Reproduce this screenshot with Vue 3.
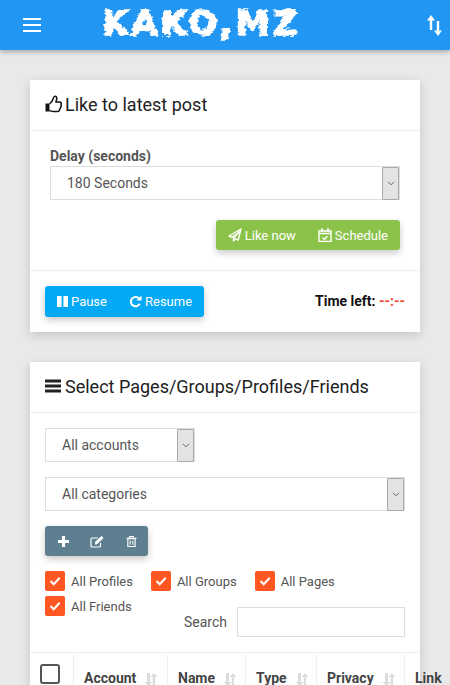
<script setup>
const checks = ['All Profiles', 'All Groups', 'All Pages', 'All Friends']
const columns = [
  { label: 'Account', width: 94, sort: true },
  { label: 'Name', width: 78, sort: true },
  { label: 'Type', width: 71, sort: true },
  { label: 'Privacy', width: 88, sort: true },
  { label: 'Link', width: 60, sort: false },
]
</script>

<template>
  <div class="page">
    <svg class="defs" width="0" height="0" aria-hidden="true">
      <filter id="jag" x="-5%" y="-20%" width="110%" height="140%">
        <feTurbulence type="fractalNoise" baseFrequency="0.14 0.28" numOctaves="2" seed="4" result="n" />
        <feDisplacementMap in="SourceGraphic" in2="n" scale="6" xChannelSelector="R" yChannelSelector="G" />
      </filter>
    </svg>

    <header class="topbar">
      <button class="menu" aria-label="Menu"><span></span><span></span><span></span></button>
      <div class="logo">KAKO,MZ</div>
      <svg class="swap" viewBox="0 0 15 21" width="15" height="21">
        <path d="M4 4v11" fill="none" stroke="#fff" stroke-width="2.400" />
        <path d="M4 0 8 5.500H0z" fill="#fff" />
        <path d="M11 6v11" fill="none" stroke="#fff" stroke-width="2.400" />
        <path d="M11 21l4-5.500H7z" fill="#fff" />
      </svg>
    </header>

    <main class="content">
      <section class="card">
        <h2 class="card-head">
          <svg class="head-icon thumb" viewBox="0 0 17 18" width="17" height="18">
            <path d="M0.500 8.500H4.500V16.500H0.500z" fill="#111" />
            <path d="M4.500 9c1.800-1.300 3.200-3.500 3.800-5.800C8.600 2 9 1.200 10 1.200c1.600 0 2 1.500 1.600 3.100L10.900 7h3.800c1.500 0 1.900 1.400 1.300 2.500.5 1 .3 2-.5 2.600.2 1-.2 1.800-1 2.300.1 1.300-.6 2.100-2 2.100H8.500c-1.600 0-2.600-.6-4-1" fill="none" stroke="#111" stroke-width="1.500" stroke-linejoin="round" />
          </svg>
          Like to latest post
        </h2>
        <div class="delay">
          <div class="field-label">Delay (seconds)</div>
          <div class="select select-pad"><span>180 Seconds</span><i class="arrow"><svg viewBox="0 0 10 6" width="8" height="5"><path d="M1 1l4 3.500L9 1" fill="none" stroke="#555" stroke-width="1" /></svg></i></div>
          <div class="actions">
            <div class="btn-group green">
              <button class="btn">
                <svg viewBox="0 0 14 14" width="14" height="14"><path d="M13 1 1 8l3.200 1.300L11 4 5.500 10.200V13l2-2.200 2.700 1.200z" fill="none" stroke="#fff" stroke-width="1.400" stroke-linejoin="round" /></svg>
                Like now
              </button>
              <button class="btn">
                <svg viewBox="0 0 14 14" width="14" height="14"><path d="M1 3h12v10.500H1zM1 5.500h12" fill="none" stroke="#fff" stroke-width="1.400" /><path d="M4 0.500v3M10 0.500v3" stroke="#fff" stroke-width="2" /><path d="m4.500 9.500 2 2 3-3.500" fill="none" stroke="#fff" stroke-width="1.300" /></svg>
                Schedule
              </button>
            </div>
          </div>
        </div>
        <div class="card-foot">
          <div class="btn-group blue">
            <button class="btn">
              <svg viewBox="0 0 12 14" width="11" height="13"><path d="M0 1h5v12H0zM7 1h5v12H7z" fill="#fff" /></svg>
              Pause
            </button>
            <button class="btn">
              <svg viewBox="0 0 14 14" width="13" height="13"><path d="M11.500 9.500A5 5 0 1 1 11 4" fill="none" stroke="#fff" stroke-width="2.200" /><path d="M13.500 0.500v5.500H8z" fill="#fff" /></svg>
              Resume
            </button>
          </div>
          <div class="time">Time left: <span>--:--</span></div>
        </div>
      </section>

      <section class="card">
        <h2 class="card-head bars">
          <svg class="head-icon" viewBox="0 0 16 14" width="16" height="14"><path d="M0 0.500h16v3H0zM0 5.500h16v3H0zM0 10.500h16v3H0z" fill="#212121" /></svg>
          Select Pages/Groups/Profiles/Friends
        </h2>
        <div class="filters">
          <div class="select select-small"><span>All accounts</span><i class="arrow"><svg viewBox="0 0 10 6" width="8" height="5"><path d="M1 1l4 3.500L9 1" fill="none" stroke="#555" stroke-width="1" /></svg></i></div>
          <div class="select"><span>All categories</span><i class="arrow"><svg viewBox="0 0 10 6" width="8" height="5"><path d="M1 1l4 3.500L9 1" fill="none" stroke="#555" stroke-width="1" /></svg></i></div>
          <div class="btn-group slate">
            <button class="icon-btn" aria-label="Add"><svg viewBox="0 0 12 12" width="11" height="11"><path d="M4.300 0h3.400v4.300H12v3.400H7.700V12H4.300V7.700H0V4.300h4.300z" fill="#fff" /></svg></button>
            <button class="icon-btn" aria-label="Edit"><svg viewBox="0 0 14 13" width="14" height="13"><path d="M10.500 8v3a1 1 0 0 1-1 1H2a1 1 0 0 1-1-1V4a1 1 0 0 1 1-1h6" fill="none" stroke="#fff" stroke-width="1.200" /><path d="M5 7 11.500 1 13.500 3 7 9.300 5 9.500z" fill="#fff" /></svg></button>
            <button class="icon-btn" aria-label="Delete"><svg viewBox="0 0 12 13" width="11" height="13"><path d="M2 3.500h8V12H2zM0.500 3h11M4 3V1h4v2M4.500 5.500v4.500M7.500 5.500v4.500" fill="none" stroke="#fff" stroke-width="1.200" /></svg></button>
          </div>
          <div class="checks">
            <label v-for="c in checks" :key="c" class="check">
              <span class="box"><svg viewBox="0 0 20 20" width="20" height="20"><path d="m5.500 10 3.200 3.200 6-6.500" fill="none" stroke="#fff" stroke-width="2" /></svg></span>
              {{ c }}
            </label>
          </div>
          <div class="search">
            <span>Search</span>
            <div class="search-input"></div>
          </div>
        </div>
        <div class="table-head">
          <div class="th th-check"><span class="empty-box"></span></div>
          <div v-for="col in columns" :key="col.label" class="th" :style="{ width: col.width + 'px' }">
            {{ col.label }}
            <svg v-if="col.sort" class="sort" viewBox="0 0 14 13" width="14" height="13"><path d="M3 0h3v9h2.500L4.500 13 .5 9H3zM10 0l3.500 4H11v9H8.700V4H6.500z" fill="#dcdcdc" /></svg>
          </div>
        </div>
      </section>
    </main>
  </div>
</template>

<style>
html, body { margin: 0; height: 685px; overflow: hidden; background: #e9e9e9; }
</style>

<style scoped>
.page { font-family: Roboto, "Liberation Sans", sans-serif; color: #555; width: 450px; height: 685px; overflow: hidden; background: #e9e9e9; }
.defs { position: absolute; }
.topbar { height: 50px; background: #2196f3; display: flex; align-items: center; box-shadow: 0 2px 5px rgba(0,0,0,.28); position: relative; }
.menu { width: 18px; margin-left: 23px; padding: 0; border: 0; background: none; display: flex; flex-direction: column; gap: 4px; }
.menu span { display: block; height: 2px; background: #fff; }
.logo { margin-left: 61px; width: 198px; font-family: "DejaVu Sans", sans-serif; font-weight: 700; font-size: 34px; line-height: 44px; letter-spacing: 3px; color: #fff; white-space: nowrap; filter: url(#jag); -webkit-text-stroke: 1.5px #fff; margin-top: -4px; }
.swap { margin-left: auto; margin-right: 8px; margin-top: 1px; }

.content { padding: 30px 30px 0; }
.card { background: #fff; margin-bottom: 30px; box-shadow: 0 3px 10px rgba(0,0,0,.16); }
.card-head { margin: 0; height: 51px; box-sizing: border-box; padding: 0 15px 2px; display: flex; align-items: center; gap: 3px; font-weight: 400; font-size: 18px; color: #212121; border-bottom: 1px solid #eee; }
.bars { gap: 4px; }
.head-icon { flex: none; }

.delay { padding: 16px 20px 20px; border-bottom: 1px solid #eee; }
.field-label { font-size: 14px; font-weight: 700; color: #555; line-height: 18px; margin-bottom: 1px; }
.select { height: 34px; box-sizing: border-box; border: 1px solid #ddd; background: #fff; display: flex; align-items: center; justify-content: space-between; padding-left: 16px; font-size: 14px; color: #555; }
.select-small { width: 150px; }
.arrow { height: 31px; background: #e3e3e3; border: 1px solid #aaa; display: flex; align-items: center; justify-content: center; width: 15px; border-radius: 1px; }
.actions { display: flex; justify-content: flex-end; margin-top: 20px; }

.btn-group { display: inline-flex; border-radius: 3px; box-shadow: 0 3px 7px rgba(0,0,0,.22); color: #fff; }
.green { background: #8bc34a; padding: 0 1px; height: 30px; }
.blue { background: #03a9f4; padding: 0 1px; height: 31px; }
.slate { background: #5d7f90; height: 30px; width: 103px; padding-left: 1px; box-sizing: border-box; align-self: flex-start; }
.btn { border: 0; background: none; color: #fff; font-family: inherit; font-size: 13px; padding: 0 11px; display: flex; align-items: center; gap: 3px; }
.icon-btn { border: 0; background: none; flex: 1; padding: 0; display: flex; align-items: center; justify-content: center; }

.card-foot { height: 61px; box-sizing: border-box; padding: 0 15px; display: flex; align-items: center; justify-content: space-between; }
.time { font-size: 14px; font-weight: 700; color: #111; padding-bottom: 2px; }
.time span { color: #f44336; font-weight: 700; }

.filters { padding: 15px 15px 15px; display: flex; flex-direction: column; gap: 15px; border-bottom: 1px solid #eee; }
.checks { display: flex; flex-wrap: wrap; column-gap: 18px; row-gap: 5px; }
.check { display: flex; align-items: center; gap: 6px; font-size: 13px; color: #555; height: 20px; }
.box { width: 20px; height: 20px; background: #ff5722; border-radius: 2px; display: block; }
.box svg { display: block; }
.search { display: flex; align-items: center; justify-content: flex-end; gap: 10px; font-size: 14px; margin-top: -24px; }
.search-input { width: 168px; height: 30px; box-sizing: border-box; border: 1px solid #ddd; }

.table-head { display: flex; height: 60px; width: 460px; align-items: flex-start; }
.th { box-sizing: border-box; height: 60px; display: flex; align-items: flex-start; padding: 15px 0 0 10px; gap: 8px; font-size: 14px; font-weight: 700; color: #444; border-left: 1px solid #eee; margin-top: 2px; white-space: nowrap; }
.th-check { width: 43px; border-left: 0; padding: 9px 0 0 10px; }
.empty-box { display: block; width: 20px; height: 20px; box-sizing: border-box; border: 2px solid #555; border-radius: 3px; }
.sort { margin-top: 3px; }
</style>
